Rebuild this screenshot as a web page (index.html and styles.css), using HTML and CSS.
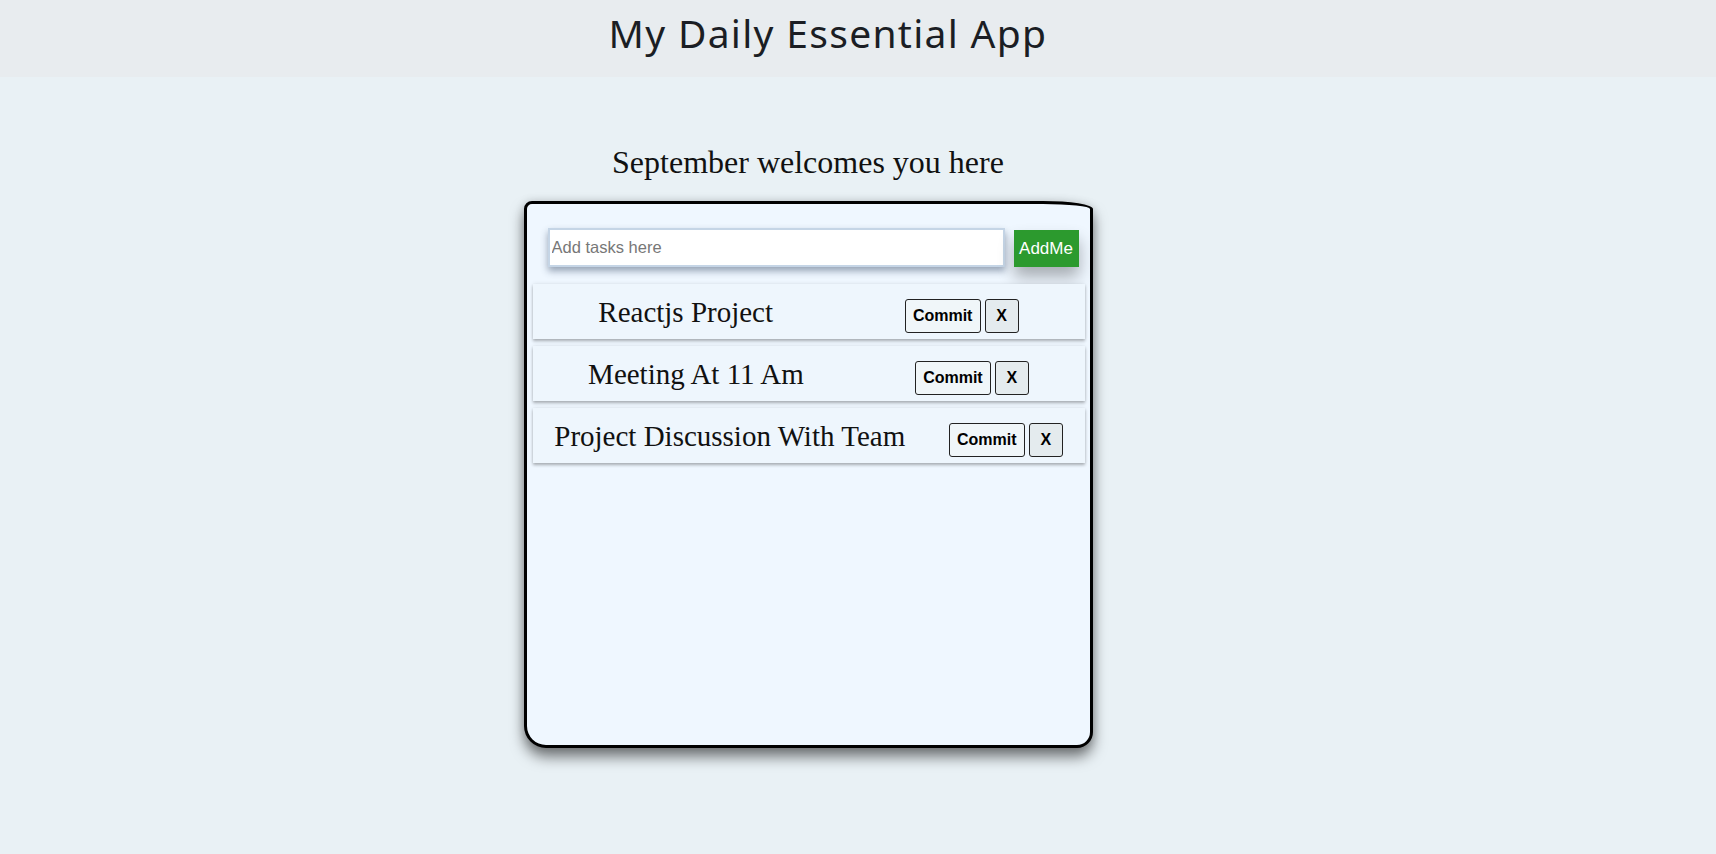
FILE: index.html
```html
<!DOCTYPE html>
<html lang="en">
<head>
<meta charset="utf-8">
<title>My Daily Essential App</title>
<link rel="stylesheet" href="styles.css">
</head>
<body>
<header class="topbar">
  <h1 class="app-title">My Daily Essential App</h1>
</header>
<main class="main">
  <h2 class="greeting">September welcomes you here</h2>
  <section class="card">
    <form class="add-row">
      <input class="task-input" type="text" placeholder="Add tasks here">
      <button class="add-btn" type="button">AddMe</button>
    </form>
    <ul class="task-list">
      <li class="task">
        <span class="task-name">Reactjs Project</span>
        <span class="task-actions"><button class="btn-commit" type="button">Commit</button><button class="btn-x" type="button">X</button></span>
      </li>
      <li class="task">
        <span class="task-name">Meeting At 11 Am</span>
        <span class="task-actions"><button class="btn-commit" type="button">Commit</button><button class="btn-x" type="button">X</button></span>
      </li>
      <li class="task">
        <span class="task-name">Project Discussion With Team</span>
        <span class="task-actions"><button class="btn-commit" type="button">Commit</button><button class="btn-x" type="button">X</button></span>
      </li>
    </ul>
  </section>
</main>
</body>
</html>
```

FILE: styles.css
```css
* { box-sizing: border-box; }

html, body {
  margin: 0;
  padding: 0;
}

body {
  background: #e9f1f5;
  font-family: "Liberation Sans", Arial, sans-serif;
  min-height: 854px;
}

.topbar {
  background: #e8ecef;
  height: 77px;
  padding-right: 60px;
  text-align: center;
}

.app-title {
  margin: 0;
  padding-top: 7px;
  font-family: "Noto Sans", "Open Sans", sans-serif;
  font-weight: 400;
  font-size: 39px;
  line-height: 52px;
  color: #1b1e24;
  letter-spacing: 1.3px;
}

.main {
  display: flex;
  flex-direction: column;
  align-items: center;
  padding-right: 100px;
}

.greeting {
  margin: 0;
  margin-top: 67px;
  font-family: "Liberation Serif", "Times New Roman", serif;
  font-weight: 400;
  font-size: 32px;
  line-height: 37px;
  color: #111;
}

.card {
  margin-top: 20px;
  width: 569px;
  height: 547px;
  background: #eff7ff;
  border: 3px solid #000;
  border-radius: 8px 50px 16px 22px / 8px 8px 16px 22px;
  box-shadow: 0 9px 14px rgba(0, 0, 0, 0.5), 0 0 10px rgba(0, 0, 0, 0.14);
  padding: 24px 5px 0 6px;
}

.add-row {
  display: flex;
  align-items: flex-start;
  padding-left: 15px;
  margin: 0 0 17px 0;
}

.task-input {
  width: 457px;
  height: 39px;
  border: 2px solid #c5d5e6;
  background: #fff;
  font-family: "Liberation Sans", Arial, sans-serif;
  font-size: 16.5px;
  padding: 0 2px;
  box-shadow: 0 4px 7px rgba(40, 60, 90, 0.45);
  outline: none;
}

.task-input::placeholder {
  color: #777;
}

.add-btn {
  margin-left: 9px;
  margin-top: 2px;
  width: 65px;
  height: 37px;
  border: none;
  background: #2c9a2e;
  color: #fff;
  font-family: "Liberation Sans", Arial, sans-serif;
  font-size: 17px;
  padding: 0;
  box-shadow: 0 10px 16px rgba(0, 0, 0, 0.3);
}

.task-list {
  list-style: none;
  margin: 0;
  padding: 0;
  display: flex;
  flex-direction: column;
  gap: 7px;
}

.task {
  height: 55px;
  display: flex;
  align-items: center;
  justify-content: space-around;
  background: #eef6fd;
  box-shadow: 0 2px 3px rgba(0, 0, 0, 0.3), 0 -1px 4px rgba(0, 0, 0, 0.06);
}

.task-name {
  font-family: "Liberation Serif", "Times New Roman", serif;
  font-size: 29px;
  color: #111;
  line-height: 34px;
}

.task-actions {
  display: flex;
  gap: 4px;
  margin-top: 9px;
}

.btn-commit, .btn-x {
  height: 34px;
  border: 1px solid #222;
  border-radius: 3px;
  font-family: "Liberation Sans", Arial, sans-serif;
  font-weight: 700;
  font-size: 16px;
  color: #000;
  padding: 0;
}

.btn-commit {
  width: 76px;
  background: #f0f6f9;
}

.btn-x {
  width: 34px;
  background: #e4ebee;
}
```
